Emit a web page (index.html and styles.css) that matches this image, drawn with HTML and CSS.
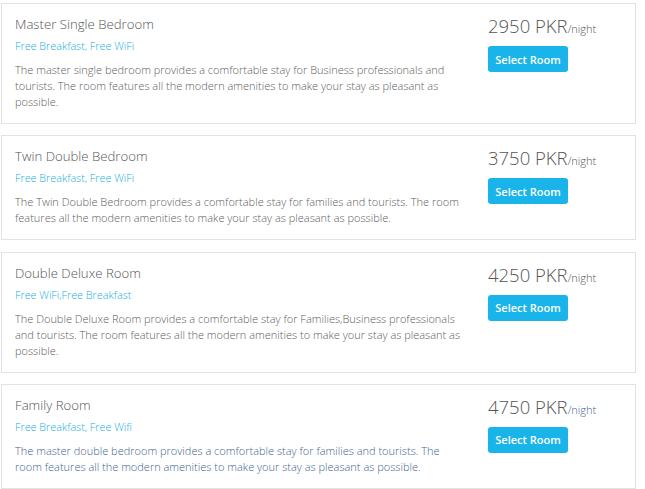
FILE: index.html
```html
<!DOCTYPE html>
<html>
<head>
<meta charset="utf-8">
<link rel="stylesheet" href="styles.css">
</head>
<body>
<div class="list">
  <div class="card">
    <div class="info">
      <div class="title">Master Single Bedroom</div>
      <div class="amen">Free Breakfast, Free WiFi</div>
      <p class="desc">The master single bedroom provides a comfortable stay for Business professionals and tourists. The room features all the modern amenities to make your stay as pleasant as possible.</p>
    </div>
    <div class="book">
      <div class="price">2950 PKR<span class="per">/night</span></div>
      <button class="btn">Select Room</button>
    </div>
  </div>
  <div class="card">
    <div class="info">
      <div class="title">Twin Double Bedroom</div>
      <div class="amen">Free Breakfast, Free WiFi</div>
      <p class="desc">The Twin Double Bedroom provides a comfortable stay for families and tourists. The room features all the modern amenities to make your stay as pleasant as possible.</p>
    </div>
    <div class="book">
      <div class="price">3750 PKR<span class="per">/night</span></div>
      <button class="btn">Select Room</button>
    </div>
  </div>
  <div class="card">
    <div class="info">
      <div class="title">Double Deluxe Room</div>
      <div class="amen">Free WiFi,Free Breakfast</div>
      <p class="desc">The Double Deluxe Room provides a comfortable stay for Families,Business professionals and tourists. The room features all the modern amenities to make your stay as pleasant as possible.</p>
    </div>
    <div class="book">
      <div class="price">4250 PKR<span class="per">/night</span></div>
      <button class="btn">Select Room</button>
    </div>
  </div>
  <div class="card card-alt">
    <div class="info">
      <div class="title">Family Room</div>
      <div class="amen">Free Breakfast, Free Wifi</div>
      <p class="desc">The master double bedroom provides a comfortable stay for families and tourists. The room features all the modern amenities to make your stay as pleasant as possible.</p>
    </div>
    <div class="book">
      <div class="price">4750 PKR<span class="per">/night</span></div>
      <button class="btn">Select Room</button>
    </div>
  </div>
</div>
</body>
</html>
```
FILE: styles.css
```css
* { box-sizing: border-box; }
body {
  margin: 0;
  background: #fff;
  font-family: "Open Sans", "Noto Sans", sans-serif;
}
.list {
  padding: 3px 9px 0 1px;
  display: flex;
  flex-direction: column;
  gap: 11.34px;
}
.card {
  border: 1px solid #e2e2e2;
  background: #fff;
  padding: 10px 13px 13px 13px;
  display: grid;
  grid-template-columns: 450px auto;
  column-gap: 23px;
}
.title {
  font-size: 13.2px;
  font-weight: 300;
  line-height: 20px;
  color: #555;
}
.amen {
  margin-top: 4px;
  font-size: 10.8px;
  font-weight: 300;
  line-height: 16px;
  color: #1aaee2;
}
.desc {
  margin: 8px 0 0;
  font-size: 11px;
  font-weight: 300;
  line-height: 16px;
  color: #606060;
}
.price {
  font-size: 18.5px;
  font-weight: 300;
  line-height: 24px;
  color: #555;
}
.per {
  font-size: 11px;
  line-height: 1;
  color: #555;
}
.btn {
  display: block;
  margin-top: 8px;
  width: 80px;
  height: 26px;
  border: 0;
  border-radius: 3px;
  background: #19b5ea;
  color: #fff;
  font-family: "Open Sans", "Noto Sans", sans-serif;
  font-size: 11px;
  font-weight: 600;
  padding: 0;
}
.card-alt .desc { color: #3f6591; }
.card-alt .per { color: #3f6591; }
```
